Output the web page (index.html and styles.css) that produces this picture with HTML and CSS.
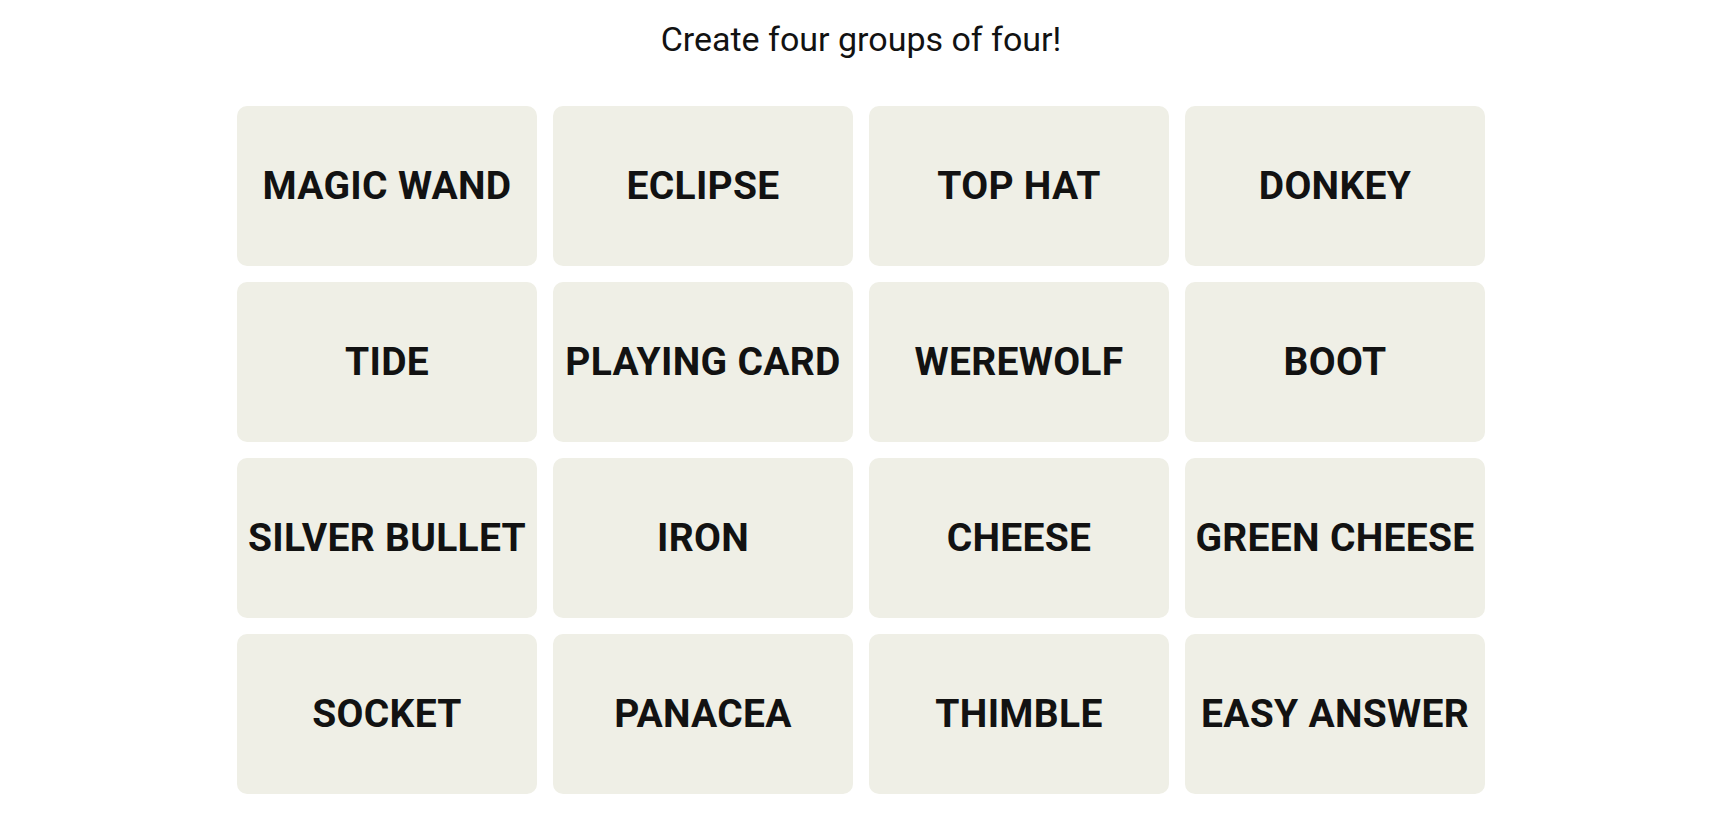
FILE: index.html
```html
<!DOCTYPE html>
<html lang="en">
<head>
<meta charset="utf-8">
<title>Connections</title>
<link rel="stylesheet" href="styles.css">
</head>
<body>
<main class="game">
  <h1 class="prompt">Create four groups of four!</h1>
  <div class="board">
    <button class="tile">MAGIC WAND</button>
    <button class="tile">ECLIPSE</button>
    <button class="tile">TOP HAT</button>
    <button class="tile">DONKEY</button>
    <button class="tile">TIDE</button>
    <button class="tile">PLAYING CARD</button>
    <button class="tile">WEREWOLF</button>
    <button class="tile">BOOT</button>
    <button class="tile">SILVER BULLET</button>
    <button class="tile">IRON</button>
    <button class="tile">CHEESE</button>
    <button class="tile">GREEN CHEESE</button>
    <button class="tile">SOCKET</button>
    <button class="tile">PANACEA</button>
    <button class="tile">THIMBLE</button>
    <button class="tile">EASY ANSWER</button>
  </div>
</main>
</body>
</html>
```
FILE: styles.css
```css
html, body {
  margin: 0;
  padding: 0;
  background: #ffffff;
}

body {
  font-family: Roboto, "Liberation Sans", sans-serif;
  color: #121212;
}

.game {
  width: 1248px;
  margin-left: 237px;
  padding-top: 19px;
}

.prompt {
  margin: 0 0 47px;
  font-size: 34px;
  font-weight: 400;
  line-height: 40px;
  text-align: center;
  color: #121212;
}

.board {
  display: grid;
  grid-template-columns: repeat(4, 300px);
  grid-auto-rows: 160px;
  gap: 16px;
}

.tile {
  display: flex;
  align-items: center;
  justify-content: center;
  margin: 0;
  padding: 0;
  border: none;
  border-radius: 10px;
  background: #efefe6;
  font-family: Roboto, "Liberation Sans", sans-serif;
  font-size: 39px;
  font-weight: 700;
  letter-spacing: 0.3px;
  color: #121212;
  white-space: nowrap;
  cursor: pointer;
}
```
